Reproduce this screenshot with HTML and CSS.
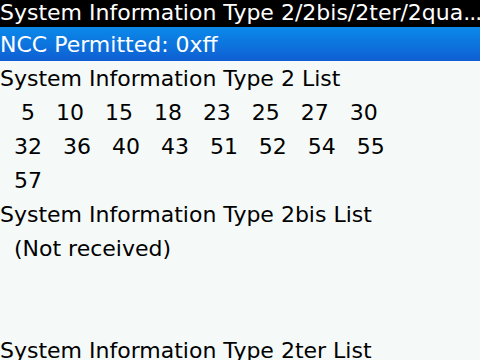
FILE: index.html
```html
<!DOCTYPE html>
<html>
<head>
<meta charset="utf-8">
<link rel="stylesheet" href="styles.css">
</head>
<body>
<div class="screen">
  <div class="title">System Information Type 2/2bis/2ter/2qua<span class="dots">...</span></div>
  <div class="list">
    <div class="row sel">NCC Permitted: 0xff</div>
    <div class="row">System Information Type 2 List</div>
    <div class="row">   5   10   15   18   23   25   27   30</div>
    <div class="row">  32   36   40   43   51   52   54   55</div>
    <div class="row">  57</div>
    <div class="row">System Information Type 2bis List</div>
    <div class="row">  (Not received)</div>
    <div class="row"></div>
    <div class="row"></div>
    <div class="row">System Information Type 2ter List</div>
  </div>
</div>
</body>
</html>
```

FILE: styles.css
```css
html, body {
  margin: 0;
  padding: 0;
  width: 480px;
  height: 360px;
  overflow: hidden;
  background: #f5faf8;
}
.screen {
  font-family: "DejaVu Sans", sans-serif;
  font-size: 22px;
  color: #000;
  display: flex;
  flex-direction: column;
}
.title {
  height: 27px;
  line-height: 25px;
  background: #000;
  color: #fff;
  white-space: nowrap;
  overflow: hidden;
}
.dots {
  letter-spacing: -1px;
}
.list {
  display: flex;
  flex-direction: column;
}
.row {
  height: 34px;
  flex-shrink: 0;
  box-sizing: border-box;
  padding-top: 2px;
  line-height: 32px;
  white-space: pre;
  overflow: hidden;
}
.row.sel {
  color: #fff;
  background: linear-gradient(to bottom, #0a8aea, #0f5fd2);
}
```
